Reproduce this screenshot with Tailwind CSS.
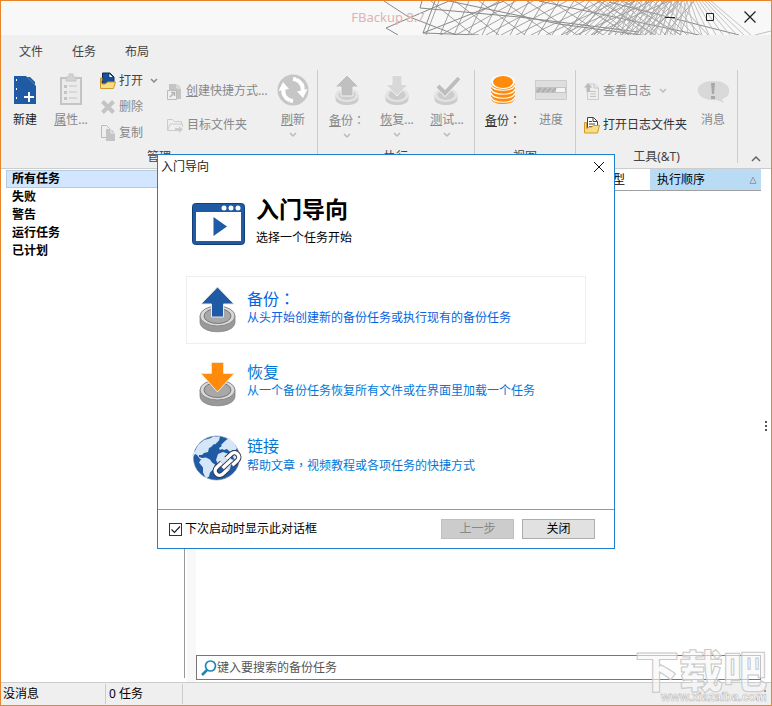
<!DOCTYPE html>
<html lang="zh-CN">
<head>
<meta charset="utf-8">
<title>FBackup 8.7</title>
<script src="https://cdn.jsdelivr.net/npm/@tailwindcss/browser@4"></script>
</head>
<body class="bg-white">
<div class="relative flex min-h-screen flex-col overflow-hidden border border-[#e8842a] bg-white font-['Noto_Sans','Noto_Sans_CJK_SC',sans-serif] text-xs text-[#444]">

  <!-- Title bar -->
  <header class="relative flex h-[34px] shrink-0 items-center bg-[#f8f8f8]">
    <svg id="art" class="absolute top-0 right-0 h-[34px] w-[388px]" viewBox="384 1 388 34" fill="none" stroke="#888" stroke-width="1">
      <path d="M385 1L408 16L465 38M387 28L450 1M387 28L399 35M423 1L421 8L520 17L640 32M424 33L480 35M424 33L436 1M424 33L505 1M450 1L560 24L650 36M540 1L700 35M610 2L740 35" />
    </svg>
    <h1 class="relative w-full pl-1 text-center text-[13px] text-[#ddb3b3]">FBackup 8.7</h1>
    <div class="absolute right-0 flex h-full items-center pr-px">
      <button aria-label="最小化" class="flex w-10 justify-center"><svg width="12" height="12" stroke="#222" fill="none"><path d="M1 5.500h10"/></svg></button>
      <button aria-label="最大化" class="flex w-10 justify-center"><svg width="12" height="12" stroke="#222" fill="none"><path d="M2.500 1.500h7v7h-7z"/></svg></button>
      <button aria-label="关闭窗口" class="flex w-10 justify-center"><svg width="14" height="14" stroke="#222" fill="none" stroke-width="1.3"><path d="M1.500 .5l11 11M12.500 .5l-11 11"/></svg></button>
    </div>
  </header>

  <!-- Ribbon -->
  <nav class="flex h-[35px] shrink-0 items-center gap-[29px] bg-[#efefef] pb-[2px] pl-[18px] text-xs">
    <button>文件</button><button>任务</button><button>布局</button>
  </nav>
  <div class="flex h-[99px] shrink-0 border-b border-[#ccc] bg-[#efefef]">
    <section class="flex h-[93px] w-[317px] shrink-0 flex-col border-r border-[#ccc]">
      <div class="flex flex-1">
        <button class="flex w-12 flex-col items-center gap-1 text-[#222]">
          <svg class="mt-[2px]" width="24" height="36" viewBox="0 0 24 36"><path d="M1 4h15l7 8v20H1z" fill="#1f5aa5"/><path d="M13 4l10 10V4z" fill="#efefef"/><path d="M14 5l8 8v-3l-5-5z" fill="#1f5aa5"/><path d="M3 7h1v2H3zM3 16h1v2H3zM3 25h1v2H3z" fill="#fff"/><path d="M16 20v10M11 25h10" stroke="#fff" stroke-width="2"/></svg>
          <span class="leading-4">新建</span>
        </button>
        <button class="flex w-11 flex-col items-center gap-1 text-[#888]">
          <svg class="mt-[2px]" width="24" height="36" viewBox="0 0 24 36" fill="none" stroke="#c4c4c4"><path d="M2 6h20v26H2z" stroke-width="2" fill="#ebebeb"/><path d="M7 5h3V2h4v3h3v4H7z" fill="#d4d4d4"/><path d="M10 14h8M10 20h8M10 26h8"/><path d="M5 13h3v3H5zM5 19h3v3H5zM5 25h3v3H5z" fill="#c4c4c4" stroke="none"/></svg>
          <span class="leading-4"><u>属</u>性...</span>
        </button>
        <div class="flex w-[74px] flex-col pl-[7px] text-[#888]">
          <button class="flex h-[26px] w-[62px] items-center gap-[3px] pb-1 text-[#444]">
            <svg width="16" height="18" viewBox="0 0 16 18"><path d="M2.500 1h7.500l4 4v8h-11.500z" fill="#174f98" stroke="#0b2a5a"/><path d="M9 1l4.500 4.500H9z" fill="#fff" stroke="#0b2a5a" stroke-width=".7"/><path d="M.5 6h1.500v3M.5 6v10.500h13l2-6.500h-8l-2 2H2z" fill="#f9dc86" stroke="#d09a2c"/></svg>
            <span>打开</span>
            <svg class="ml-1" width="8" height="6" fill="none" stroke="#888" stroke-width="1.5"><path d="M1 1l3 3 3-3"/></svg>
          </button>
          <button class="flex h-[26px] items-center gap-[3px] pb-1">
            <svg width="16" height="16" stroke="#c4c4c4" stroke-width="4"><path d="M2.500 2.500l11 11M13.500 2.500l-11 11"/></svg><span>删除</span>
          </button>
          <button class="flex h-[26px] items-center gap-[3px] pb-1">
            <svg width="16" height="16" viewBox="0 0 16 16"><path d="M1.500.5h5l3 3v9h-8z" fill="#eee" stroke="#bbb"/><path d="M6 4h5l4 4v8H6z" fill="#c4c4c4"/><path d="M11 4v4h4" fill="none" stroke="#eee"/></svg><span>复制</span>
          </button>
        </div>
        <div class="flex w-[104px] shrink-0 flex-col pt-1 text-[#888]">
          <button class="flex h-[34px] items-center gap-1 whitespace-nowrap">
            <svg class="shrink-0" width="15" height="17" viewBox="0 0 15 17"><path d="M2 1h8l4 4v11H2z" fill="#c4c4c4"/><path d="M10 1v4h4" fill="none" stroke="#eee"/><path d="M.5 7.500h9v9h-9z" fill="#efefef" stroke="#bbb"/><path d="M3 14l4-4M4 9.500h3.500V13" fill="none" stroke="#b4b4b4" stroke-width="1.500"/></svg>
            <span><u>创</u>建快捷方式...</span>
          </button>
          <button class="flex h-[34px] items-center gap-1 whitespace-nowrap">
            <svg class="shrink-0" width="16" height="15" viewBox="0 0 16 15" fill="none" stroke="#ccc"><path d="M.5 12.500v-11h5l2 2h7V6M.5 12.500L3 6h12.500v3M1 12.500h7"/><path d="M8 10h4V8l4 3.500-4 3.500v-2H8z" fill="#ccc" stroke="none"/></svg>
            <span>目标文件夹</span>
          </button>
        </div>
        <button class="flex w-11 flex-col items-center gap-1 text-[#888]">
          <svg class="mt-[2px] shrink-0" width="32" height="36" viewBox="0 0 32 36"><circle cx="16" cy="18" r="15.500" fill="#c6c6c6"/><path d="M13 28.500C8 26 5.500 22 6.500 17M19 7.500c5 2.500 7.500 6.500 6.500 11.500" fill="none" stroke="#fff" stroke-width="4"/><path d="M1.500 19l4.500-9 6 7zM20 19.500l10.500-2.500-4.500 9z" fill="#fff"/><path d="M13 28.500l3 .5M16 7l3 .5" fill="none" stroke="#fff" stroke-width="4"/></svg>
          <span class="leading-4"><u>刷</u>新</span>
          <svg width="8" height="6" fill="none" stroke="#bbb" stroke-width="1.500"><path d="M1 1l3 3 3-3"/></svg>
        </button>
      </div>
      <h2 class="h-[15px] text-center leading-[18px]">管理</h2>
    </section>

    <section class="flex h-[93px] w-[157px] shrink-0 flex-col border-r border-[#ccc]">
      <div class="flex flex-1 gap-[2px] pl-[5px] text-[#888]">
        <button class="flex w-12 flex-col items-center gap-1">
          <svg class="mt-[2px]" width="24" height="36" viewBox="0 0 24 36"><path d="M.5 23v4c0 8 23 8 23 0v-4z" fill="#ccc"/><ellipse cx="12" cy="23" rx="11.500" ry="7" fill="#e3e3e3"/><ellipse cx="12" cy="23" rx="8.500" ry="5" fill="#ccc"/><path d="M12 3L24 15h-6v9H6v-9H0z" fill="#c0c0c0" stroke="#f2f2f2"/></svg>
          <span class="leading-4"><u>备</u>份<span lang="zh-TW" class="font-['Noto_Sans_CJK_TC',sans-serif]">：</span></span>
          <svg width="8" height="6" fill="none" stroke="#bbb" stroke-width="1.500"><path d="M1 1l3 3 3-3"/></svg>
        </button>
        <button class="flex w-12 flex-col items-center gap-1">
          <svg class="mt-[2px]" width="24" height="36" viewBox="0 0 24 36"><path d="M.5 23v4c0 8 23 8 23 0v-4z" fill="#ccc"/><ellipse cx="12" cy="23" rx="11.500" ry="7" fill="#e3e3e3"/><ellipse cx="12" cy="23" rx="8.500" ry="5" fill="#ccc"/><path d="M7 3.500h10v9h6L12 24 1 12.500h6z" fill="#d8d8d8" stroke="#f2f2f2"/></svg>
          <span class="leading-4"><u>恢</u>复...</span>
          <svg width="8" height="6" fill="none" stroke="#bbb" stroke-width="1.500"><path d="M1 1l3 3 3-3"/></svg>
        </button>
        <button class="flex w-12 flex-col items-center gap-1">
          <svg class="mt-[2px]" width="26" height="36" viewBox="0 0 26 36"><path d="M.5 23v4c0 8 23 8 23 0v-4z" fill="#ccc"/><ellipse cx="12" cy="23" rx="11.500" ry="7" fill="#e3e3e3"/><ellipse cx="12" cy="23" rx="8.500" ry="5" fill="#ccc"/><path d="M4 14l7 7L25 6" fill="none" stroke="#f2f2f2" stroke-width="6"/><path d="M4 14l7 7L25 6" fill="none" stroke="#bdbdbd" stroke-width="4"/></svg>
          <span class="leading-4"><u>测</u>试...</span>
          <svg width="8" height="6" fill="none" stroke="#bbb" stroke-width="1.500"><path d="M1 1l3 3 3-3"/></svg>
        </button>
      </div>
      <h2 class="h-[15px] text-center leading-[18px]">执行</h2>
    </section>

    <section class="flex h-[93px] w-[101px] shrink-0 flex-col border-r border-[#ccc]">
      <div class="flex flex-1 pl-1 text-[#888]">
        <button class="flex w-12 flex-col items-center gap-1 text-[#333]">
          <svg class="mt-[2px]" width="26" height="36" viewBox="0 0 26 36"><path d="M1 9v17c0 8 24 8 24 0V9z" fill="#ff8a0c"/><path d="M1 13c2 7 22 7 24 0M1 17c2 7 22 7 24 0M1 21c2 7 22 7 24 0M1 25c2 7 22 7 24 0" fill="none" stroke="#fff" stroke-width="1.200"/><ellipse cx="13" cy="10" rx="12" ry="7" fill="#fff"/><ellipse cx="13" cy="10" rx="10" ry="6" fill="#ff8a0c"/></svg>
          <span class="leading-4"><u>备</u>份<span lang="zh-TW" class="font-['Noto_Sans_CJK_TC',sans-serif]">：</span></span>
        </button>
        <button class="flex w-12 flex-col items-center gap-1">
          <svg class="mt-[2px]" width="32" height="36" viewBox="0 0 32 36"><path d="M.5 8.500h31v19H.5z" fill="#dedede" stroke="#ccc"/><path d="M1 15h30v6H1z" fill="#c4c4c4"/><path d="M21 16h9v4h-9z" fill="#f4f4f4"/><path d="M2 20l4-4M7 20l4-4M12 20l4-4M17 20l4-4" stroke="#aeaeae" stroke-width="2"/></svg>
          <span class="leading-4">进度</span>
        </button>
      </div>
      <h2 class="h-[15px] text-center leading-[18px]">视图</h2>
    </section>

    <section class="flex h-[93px] w-[162px] shrink-0 flex-col border-r border-[#ccc]">
      <div class="flex flex-1 text-[#888]">
        <div class="flex w-[113px] flex-col pt-1 pl-2">
          <button class="flex h-[34px] items-center gap-1 whitespace-nowrap">
            <svg class="shrink-0" width="15" height="17" viewBox="0 0 15 17"><path d="M3.500 1h7l4 4v11.500h-11z" fill="#eee" stroke="#ccc"/><path d="M6 8.500h6M6 11h6M6 13.500h6M10 1v4h4" fill="none" stroke="#c4c4c4"/><path d="M4 0l4.500 4.500H6V9H2.500V4.500H0z" fill="#bbb"/></svg>
            <span>查看日志</span>
            <svg class="ml-1" width="8" height="6" fill="none" stroke="#bbb" stroke-width="1.500"><path d="M1 1l3 3 3-3"/></svg>
          </button>
          <button class="flex h-[34px] items-center gap-[3px] whitespace-nowrap text-[#333]">
            <svg class="shrink-0" width="16" height="17" viewBox="0 0 16 17"><path d="M3.500.5h6l4 4V14h-10z" fill="#fff" stroke="#444"/><path d="M9 .5v4h4M5 4.500h3M5 7h6M5 9.500h6" fill="none" stroke="#444"/><path d="M.5 5.500h2v6l3-1.500h2l2-1.500h6l-2 7.500H.5z" fill="#f9dc86" stroke="#d09a2c"/></svg>
            <span>打开日志文件夹</span>
          </button>
        </div>
        <button class="flex w-12 flex-col items-center gap-1">
          <svg class="mt-[2px]" width="32" height="36" viewBox="0 0 32 36"><path d="M16 9c20 0 20 15 9 18l2 4-7-3C-4 30-6 9 16 9z" fill="#d8d8d8"/><path d="M14 11h4l-1 11h-2zM14 24h4v3h-4z" fill="#a8a8a8"/></svg>
          <span class="leading-4">消息</span>
        </button>
      </div>
      <h2 class="h-[15px] text-center leading-[18px]">工具(&amp;T)</h2>
    </section>
    <button aria-label="折叠功能区" class="ml-auto flex items-end pr-[10px] pb-[5px]"><svg width="10" height="8" fill="none" stroke="#666" stroke-width="1.500"><path d="M1 6l4-4 4 4"/></svg></button>
  </div>

  <!-- Workspace -->
  <main class="flex flex-1">
    <aside class="mb-1 w-[184px] shrink-0 border-r border-[#999] pt-px pl-[5px]">
      <ul class="font-bold text-black">
        <li class="h-[18px] border border-[#b4cbe0] bg-[#d3e6ff] pl-[5px] leading-4">所有任务</li>
        <li class="h-[18px] pl-[6px] leading-[18px]">失败</li>
        <li class="h-[18px] pl-[6px] leading-[18px]">警告</li>
        <li class="h-[18px] pl-[6px] leading-[18px]">运行任务</li>
        <li class="h-[18px] pl-[6px] leading-[18px]">已计划</li>
      </ul>
    </aside>
    <div class="ml-[2px] w-[9px] shrink-0 bg-[#f8f8f8]"></div>
    <section class="flex flex-1 flex-col">
      <table class="w-full border-collapse text-left text-black">
        <thead><tr class="h-[21px] border-b border-[#a0a0a0]">
          <th class="p-0"></th>
          <th class="w-[50px] p-0 pt-[2px] pl-px font-normal">类型</th>
          <th class="w-[111px] bg-[#b9dcf4] p-0 pt-[2px] pr-1 pl-[7px] font-normal"><span class="flex items-center justify-between">执行顺序<svg width="8" height="9" fill="none" stroke="#999"><path d="M4 1L1 7.500h6z"/></svg></span></th>
        </tr></thead>
      </table>
      <label class="mt-auto mb-[2px] flex h-[25px] items-center border border-[#777] bg-white pl-1">
        <svg class="shrink-0" width="16" height="16" viewBox="0 0 16 16" fill="none" stroke="#1a86b8"><circle cx="9.500" cy="6" r="5" stroke-width="1.700"/><path d="M6 10l-5 5" stroke-width="2.500"/></svg>
        <input aria-label="搜索" class="w-full outline-none placeholder:text-[#555]" placeholder="键入要搜索的备份任务">
      </label>
    </section>
    <div class="flex w-[10px] shrink-0 items-center justify-center"><svg width="3" height="10" fill="#555"><path d="M0 0h2v2H0zM0 4h2v2H0zM0 8h2v2H0z"/></svg></div>
  </main>

  <footer class="flex h-[23px] shrink-0 items-center border-t border-[#ccc] bg-[#efefef] text-black">
    <span class="w-[105px] border-r border-[#ccc] pl-[2px] leading-5">没消息</span>
    <span class="w-[77px] border-r border-[#ccc] pl-[3px] leading-5">0 任务</span>
    <svg class="mt-auto mr-[5px] mb-[5px] ml-auto" width="10" height="10" fill="#999"><path d="M8 0h2v2H8zM4 4h2v2H4zM8 4h2v2H8zM0 8h2v2H0zM4 8h2v2H4zM8 8h2v2H8z"/></svg>
  </footer>

  <!-- Watermark -->
  <svg class="pointer-events-none absolute right-0 bottom-0" width="138" height="60" viewBox="0 0 138 60">
    <text class="font-['Noto_Sans_CJK_SC',sans-serif] text-[44px] font-black" x="2" y="43" fill="#f8f8f8" fill-opacity=".6" stroke="#c8c8c8">下载吧</text>
    <text class="font-['Liberation_Sans',sans-serif] text-xs font-bold" x="28" y="56" fill="#fff" stroke="#bbb" stroke-width=".6">www.xiazaiba.com</text>
  </svg>

  <!-- Getting-started dialog -->
  <div role="dialog" aria-labelledby="dlg" class="absolute top-[153px] left-1/2 flex w-[458px] -translate-x-1/2 flex-col border border-[#1e80d0] bg-white text-black">
    <div class="flex h-6 items-center justify-between pr-[9px] pl-[3px] text-[#222]">
      <span>入门导向</span>
      <button aria-label="关闭对话框"><svg width="12" height="12" stroke="#111" fill="none"><path d="M1 1l10 10M11 1L1 11"/></svg></button>
    </div>
    <div class="flex gap-[11px] pt-4 pl-[34px]">
      <svg class="mt-2" width="53" height="42" viewBox="0 0 53 42"><rect x=".5" y=".5" width="52" height="41" rx="3" fill="#1f5aa5" stroke="#123f7b"/><path d="M4 9h45v29H4z" fill="#fff"/><circle cx="32" cy="5" r="2.500" fill="#fff"/><circle cx="39" cy="5" r="2.500" fill="#fff"/><circle cx="46" cy="5" r="2.500" fill="#fff"/><path d="M21.500 14v19L35 23.500z" fill="#1f5aa5"/></svg>
      <div>
        <h2 id="dlg" class="text-[23px] leading-7 font-bold">入门导向</h2>
        <p class="leading-[30px]">选择一个任务开始</p>
      </div>
    </div>
    <div class="mt-[23px] mr-7 ml-7 flex flex-col gap-[6px] text-[#0078d7]">
      <button class="flex h-[68px] items-center gap-1 border border-[#eee] pl-1 text-left text-[#0563e0]">
        <svg width="52" height="48" viewBox="0 0 52 48"><path d="M9 30v6c0 13 35 13 35 0v-6z" fill="#999" stroke="#777" stroke-width=".7"/><ellipse cx="26.500" cy="30" rx="17.500" ry="10" fill="#d8d8d8" stroke="#888"/><ellipse cx="26.500" cy="30" rx="13.500" ry="7.500" fill="#a8a8a8" stroke="#777"/><path d="M26.500 1L43 18H32.500v13h-12V18H10z" fill="#1f5aa5" stroke="#e8e8e8"/></svg>
        <span class="flex flex-col pb-[6px]"><span class="text-base leading-5">备份<span lang="zh-TW" class="font-['Noto_Sans_CJK_TC',sans-serif]">：</span></span><span class="leading-[18px]">从头开始创建新的备份任务或执行现有的备份任务</span></span>
      </button>
      <button class="flex h-[68px] items-center gap-1 border border-transparent pl-1 text-left">
        <svg width="52" height="48" viewBox="0 0 52 48"><path d="M9 30v6c0 13 35 13 35 0v-6z" fill="#999" stroke="#777" stroke-width=".7"/><ellipse cx="26.500" cy="30" rx="17.500" ry="10" fill="#d8d8d8" stroke="#888"/><ellipse cx="26.500" cy="30" rx="13.500" ry="7.500" fill="#a8a8a8" stroke="#777"/><path d="M20.500 2.500h12v11H43L26.500 32 10 13.500h10.500z" fill="#ff8a0c" stroke="#f0e4d4"/></svg>
        <span class="flex flex-col pb-[6px]"><span class="text-base leading-5">恢复</span><span class="leading-[18px]">从一个备份任务恢复所有文件或在界面里加载一个任务</span></span>
      </button>
      <button class="flex h-[68px] items-center gap-1 border border-transparent pl-1 text-left">
        <svg width="52" height="48" viewBox="0 0 52 48"><ellipse cx="25.500" cy="24" rx="23" ry="22" fill="#1f5aa5" stroke="#6a7f98" stroke-width=".6"/><path d="M4 17l3-6 6-5 7-2 3 1-2 3 2 2-3 3-2 1-1 4-4 1-2 2-3 0 0 2 3 1 2 2-4-1-3-4-2-1-2 3-1-2zM11 24l4-.5 4 2 2 3 3 2-2 5-3 3-1 4-3 2-3-6 0-5-4-5zM17 6l5-3.500 7 0-1 4-4 4-3-2zM30 11l4-4 4-3 5 5 3 5-2 3-3-1 0 3-3-2-2-2-3 1-2-1-2 1-1-2 3-2zM27 20l5-2 3 1 3 1 2 5 3 1-3 4-1 5-3 4-3-3-1-6-5 0-2-4zM44 18l3 2 1 7-3 1-3-5z" fill="#d5e6f8"/><g transform="translate(36 30) rotate(-43)" fill="none"><path d="M-3-4.500h-7c-6 0-6 9 0 9h7M3-4.500h7c6 0 6 9 0 9H3M-5 0H5" stroke="#334" stroke-width="5.200"/><path d="M-3-4.500h-7c-6 0-6 9 0 9h7M3-4.500h7c6 0 6 9 0 9H3M-6 0H6" stroke="#fff" stroke-width="3.400"/></g></svg>
        <span class="flex flex-col pb-[6px]"><span class="text-base leading-5">链接</span><span class="leading-[18px]">帮助文章<span lang="zh-TW" class="font-['Noto_Sans_CJK_TC',sans-serif]">，</span>视频教程或各项任务的快捷方式</span></span>
      </button>
    </div>
    <div class="mt-[17px] flex h-[39px] items-center gap-2 border-t border-[#999] pr-[19px] pl-[11px]">
      <label class="mr-auto flex items-center gap-[3px]">
        <span class="relative flex"><input type="checkbox" checked class="peer size-[13px] appearance-none border border-[#333] bg-white"><svg class="pointer-events-none absolute inset-0 hidden peer-checked:block" width="13" height="13" fill="none" stroke="#222" stroke-width="1.200"><path d="M2.500 6.500l3 3 5.500-6"/></svg></span>
        下次启动时显示此对话框
      </label>
      <button disabled class="h-5 w-[73px] border border-[#bfbfbf] bg-[#ccc] leading-[18px] text-[#888]">上一步</button>
      <button class="h-5 w-[73px] border border-[#adadad] bg-[#e1e1e1] leading-[18px]">关闭</button>
    </div>
  </div>
</div>
<script>
  // Line fans of the title bar: top x, top step, bottom x, bottom step, count, colour
  const fans = [
    [440, 15, 427, 14, 18, '#8a8a8a'],
    [432, 24, 474, 26, 9, '#8a8a8a'],
    [500, 17, 442, 15, 11, '#8f8f8f'],
    [600, 6, 562, 6, 15, '#999'],
    [590, 8, 632, 7, 12, '#a4a4a4'],
    [628, 5, 616, 5, 14, '#aaa'],
    [664, 3, 640, 7, 17, '#b4b4b4']
  ];
  document.getElementById('art').insertAdjacentHTML('beforeend', fans.map(([a, s, b, t, n, c]) =>
    `<path stroke="${c}" stroke-width=".8" d="${Array.from({length: n}, (_, i) => `M${a + s * i} 1L${b + t * i} 35`).join('')}"/>`
  ).join('') + '<path stroke="#c0c0c0" d="M756 35L772 31"/>');
</script>
</body>
</html>
